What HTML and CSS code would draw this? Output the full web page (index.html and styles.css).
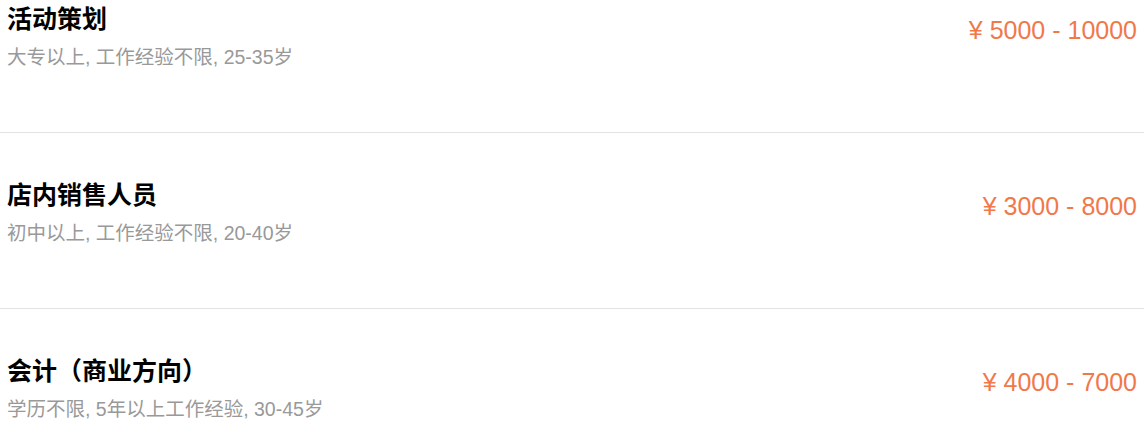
FILE: index.html
```html
<!DOCTYPE html>
<html lang="zh-CN">
<head>
  <meta charset="UTF-8">
  <meta name="viewport" content="width=device-width, initial-scale=1.0">
  <title>职位列表</title>
  <link rel="stylesheet" href="styles.css">
</head>
<body>
  <ul class="job-list">
    <li class="job">
      <div class="job-info">
        <h3 class="job-title">活动策划</h3>
        <p class="job-desc">大专以上, 工作经验不限, 25-35岁</p>
      </div>
      <span class="job-salary">¥ 5000 - 10000</span>
    </li>
    <li class="job">
      <div class="job-info">
        <h3 class="job-title">店内销售人员</h3>
        <p class="job-desc">初中以上, 工作经验不限, 20-40岁</p>
      </div>
      <span class="job-salary">¥ 3000 - 8000</span>
    </li>
    <li class="job">
      <div class="job-info">
        <h3 class="job-title">会计（商业方向）</h3>
        <p class="job-desc">学历不限, 5年以上工作经验, 30-45岁</p>
      </div>
      <span class="job-salary">¥ 4000 - 7000</span>
    </li>
  </ul>
</body>
</html>
```

FILE: styles.css
```css
body {
  margin: 0;
  font-family: 'Liberation Sans', 'Noto Sans CJK SC', sans-serif;
  background-color: #ffffff;
  color: #000000;
  overflow: hidden;
}

.job-list {
  list-style: none;
  margin: 0;
  padding: 0;
}

.job {
  display: flex;
  justify-content: space-between;
  align-items: flex-start;
  padding: 47px 7px 63px 7px;
  border-bottom: 1px solid #e3e3e3;
}

.job:first-child {
  padding-top: 4px;
}

.job-title {
  margin: 0;
  font-size: 25px;
  line-height: 30px;
  font-weight: bold;
}

.job-desc {
  margin: 11px 0 0;
  font-size: 19.5px;
  line-height: 24px;
  color: #999999;
}

.job-salary {
  margin-top: 11px;
  font-size: 25px;
  line-height: 30px;
  color: #f0784a;
}
```
